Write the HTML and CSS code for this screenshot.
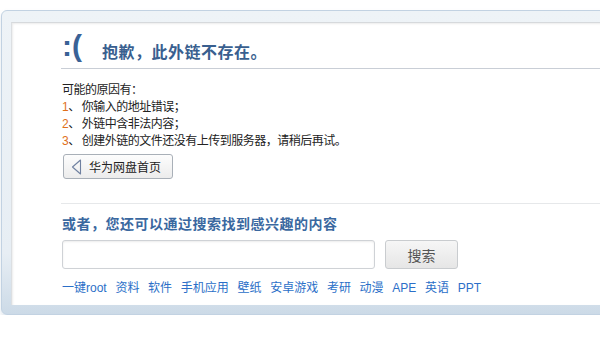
FILE: index.html
```html
<!DOCTYPE html>
<html lang="zh-CN">
<head>
<meta charset="utf-8">
<title>抱歉，此外链不存在</title>
<link rel="stylesheet" href="styles.css">
</head>
<body>
<div class="frame">
  <div class="panel">
    <div class="head">
      <span class="sad">:(</span>
      <h1 class="title">抱歉，此外链不存在。</h1>
    </div>
    <div class="reasons">
      <p>可能的原因有：</p>
      <p><span class="num">1</span>、<span class="gap"></span>你输入的地址错误；</p>
      <p><span class="num">2</span>、<span class="gap"></span>外链中含非法内容；</p>
      <p><span class="num">3</span>、<span class="gap"></span>创建外链的文件还没有上传到服务器，请稍后再试。</p>
    </div>
    <a class="home-btn" href="#">
      <svg class="arrow" width="11" height="16" viewBox="0 0 11 16"><path d="M9.5 1 L1.5 8 L9.5 15 Z" fill="none" stroke="#6f80a0" stroke-width="1.1" stroke-linejoin="round"/></svg>
      <span>华为网盘首页</span>
    </a>
    <div class="search">
      <h2 class="search-title">或者，您还可以通过搜索找到感兴趣的内容</h2>
      <div class="search-row">
        <input class="search-input" type="text">
        <button class="search-btn" type="button">搜索</button>
      </div>
      <div class="tags">
        <a href="#">一键root</a>
        <a href="#">资料</a>
        <a href="#">软件</a>
        <a href="#">手机应用</a>
        <a href="#">壁纸</a>
        <a href="#">安卓游戏</a>
        <a href="#">考研</a>
        <a href="#">动漫</a>
        <a href="#">APE</a>
        <a href="#">英语</a>
        <a href="#">PPT</a>
      </div>
    </div>
  </div>
</div>
</body>
</html>
```

FILE: styles.css
```css
* { box-sizing: border-box; }
html, body { margin: 0; padding: 0; background: #fff; overflow: hidden; }
body {
  font-family: "Liberation Sans", "Noto Sans CJK SC", sans-serif;
  font-size: 12px;
  color: #222;
  padding: 10px 0 0 1px;
}
.frame {
  width: 640px;
  height: 305px;
  border: 1px solid #c2d2e2;
  border-radius: 6px;
  background: linear-gradient(#eef3f7, #e7eef4 80%, #ccdae7);
  padding: 11px 0 8px 9px;
  box-shadow: 0 3px 4px rgba(160,180,200,0.35);
}
.panel {
  height: 283px;
  background: #fff;
  border-top: 1px solid #d6d9dc;
  border-left: 1px solid #dcdfe2;
  box-shadow: inset 1px 1px 2px rgba(0,0,0,0.08);
  padding: 0 0 0 49px;
}
.head {
  display: flex;
  align-items: flex-end;
  height: 46px;
  border-bottom: 1px solid #c9ced6;
  padding-left: 1px;
  padding-bottom: 7px;
}
.sad {
  font-family: "Liberation Sans", sans-serif;
  font-size: 30px;
  line-height: 30px;
  color: #3a6296;
  width: 40px;
  font-weight: bold;
}
.title {
  margin: 0;
  font-family: "Noto Sans CJK SC", sans-serif;
  font-size: 16px;
  line-height: 20px;
  font-weight: bold;
  color: #395f8f;
  letter-spacing: 0.5px;
}
.reasons { padding: 13px 0 0 1px; letter-spacing: -0.5px; }
.reasons p { margin: 0; line-height: 17px; }
.num { color: #e0701a; }
.gap { display: inline-block; width: 2px; }
.home-btn {
  display: inline-flex;
  align-items: center;
  gap: 7px;
  margin: 4px 0 0 2px;
  width: 110px;
  height: 25px;
  padding-left: 7px;
  border: 1px solid #a9b0b8;
  border-radius: 3px;
  background: linear-gradient(#fdfdfd, #ececec);
  color: #222;
  text-decoration: none;
  font-size: 12px;
}
.search {
  margin-top: 24px;
  border-top: 1px solid #e6e8ea;
  padding: 9px 0 0 1px;
}
.search-title {
  margin: 0;
  font-family: "Noto Sans CJK SC", sans-serif;
  font-size: 14px;
  line-height: 20px;
  font-weight: bold;
  color: #3a68a0;
  letter-spacing: 0.5px;
}
.search-row {
  display: flex;
  gap: 10px;
  margin-top: 7px;
}
.search-input {
  width: 313px;
  height: 29px;
  border: 1px solid #cfd2d6;
  border-radius: 3px;
  background: #fff;
  box-shadow: inset 0 1px 2px rgba(0,0,0,0.08);
}
.search-btn {
  width: 73px;
  height: 29px;
  border: 1px solid #c9cccf;
  border-radius: 3px;
  background: linear-gradient(#f6f6f6, #e6e6e6);
  font-family: "Noto Sans CJK SC", sans-serif;
  font-size: 14px;
  color: #555;
}
.tags {
  display: flex;
  gap: 8.7px;
  margin-top: 11px;
}
.tags a {
  color: #2b6fc8;
  text-decoration: none;
  font-size: 12px;
  line-height: 17px;
}
```
